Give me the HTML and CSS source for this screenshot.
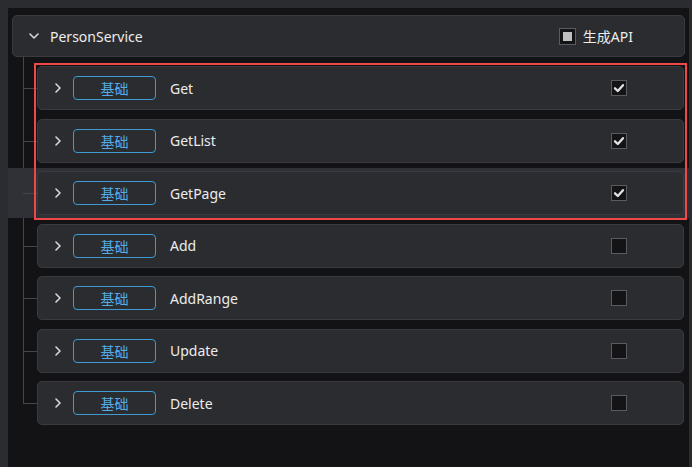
FILE: index.html
```html
<!DOCTYPE html>
<html lang="zh">
<head>
<meta charset="utf-8">
<title>PersonService</title>
<link rel="stylesheet" href="styles.css">
</head>
<body>
<div class="panel">
  <div class="header">
    <svg class="chev-down" width="16" height="16" viewBox="0 0 16 16"><path d="M4 6 L8 10 L12 6" fill="none" stroke="#d8d8d8" stroke-width="1.6" stroke-linecap="round" stroke-linejoin="round"/></svg>
    <span class="title">PersonService</span>
    <label class="gen">
      <span class="cb cb-ind"><span class="ind"></span></span>
      <span class="gen-text">生成API</span>
    </label>
  </div>
  <div class="tree">
    <div class="node">
      <div class="card">
        <svg class="chev" width="16" height="16" viewBox="0 0 16 16"><path d="M6 4 L10 8 L6 12" fill="none" stroke="#d8d8d8" stroke-width="1.6" stroke-linecap="round" stroke-linejoin="round"/></svg>
        <span class="badge">基础</span><span class="name">Get</span>
        <span class="cb checked"><svg width="14" height="14" viewBox="0 0 14 14"><path d="M3 7.3 L5.8 10 L11 4.2" fill="none" stroke="#e2e2e2" stroke-width="2.3" stroke-linecap="round" stroke-linejoin="round"/></svg></span>
      </div>
    </div>
    <div class="node">
      <div class="card">
        <svg class="chev" width="16" height="16" viewBox="0 0 16 16"><path d="M6 4 L10 8 L6 12" fill="none" stroke="#d8d8d8" stroke-width="1.6" stroke-linecap="round" stroke-linejoin="round"/></svg>
        <span class="badge">基础</span><span class="name">GetList</span>
        <span class="cb checked"><svg width="14" height="14" viewBox="0 0 14 14"><path d="M3 7.3 L5.8 10 L11 4.2" fill="none" stroke="#e2e2e2" stroke-width="2.3" stroke-linecap="round" stroke-linejoin="round"/></svg></span>
      </div>
    </div>
    <div class="node hover">
      <div class="card">
        <svg class="chev" width="16" height="16" viewBox="0 0 16 16"><path d="M6 4 L10 8 L6 12" fill="none" stroke="#d8d8d8" stroke-width="1.6" stroke-linecap="round" stroke-linejoin="round"/></svg>
        <span class="badge">基础</span><span class="name">GetPage</span>
        <span class="cb checked"><svg width="14" height="14" viewBox="0 0 14 14"><path d="M3 7.3 L5.8 10 L11 4.2" fill="none" stroke="#e2e2e2" stroke-width="2.3" stroke-linecap="round" stroke-linejoin="round"/></svg></span>
      </div>
    </div>
    <div class="node">
      <div class="card">
        <svg class="chev" width="16" height="16" viewBox="0 0 16 16"><path d="M6 4 L10 8 L6 12" fill="none" stroke="#d8d8d8" stroke-width="1.6" stroke-linecap="round" stroke-linejoin="round"/></svg>
        <span class="badge">基础</span><span class="name">Add</span>
        <span class="cb"></span>
      </div>
    </div>
    <div class="node">
      <div class="card">
        <svg class="chev" width="16" height="16" viewBox="0 0 16 16"><path d="M6 4 L10 8 L6 12" fill="none" stroke="#d8d8d8" stroke-width="1.6" stroke-linecap="round" stroke-linejoin="round"/></svg>
        <span class="badge">基础</span><span class="name">AddRange</span>
        <span class="cb"></span>
      </div>
    </div>
    <div class="node">
      <div class="card">
        <svg class="chev" width="16" height="16" viewBox="0 0 16 16"><path d="M6 4 L10 8 L6 12" fill="none" stroke="#d8d8d8" stroke-width="1.6" stroke-linecap="round" stroke-linejoin="round"/></svg>
        <span class="badge">基础</span><span class="name">Update</span>
        <span class="cb"></span>
      </div>
    </div>
    <div class="node">
      <div class="card">
        <svg class="chev" width="16" height="16" viewBox="0 0 16 16"><path d="M6 4 L10 8 L6 12" fill="none" stroke="#d8d8d8" stroke-width="1.6" stroke-linecap="round" stroke-linejoin="round"/></svg>
        <span class="badge">基础</span><span class="name">Delete</span>
        <span class="cb"></span>
      </div>
    </div>
    <div class="selection"></div>
  </div>
</div>
</body>
</html>
```
FILE: styles.css
```css
* { box-sizing: border-box; }
html, body { margin: 0; padding: 0; height: 100%; }
body {
  background: #2b2c30;
  font-family: "Noto Sans", "Noto Sans CJK SC", sans-serif;
  font-size: 14px;
  color: #ececec;
  overflow: hidden;
}
.panel {
  margin: 8px 0 0 8px;
  width: 681px;
  height: calc(100% - 8px);
  background: #131315;
  padding-top: 7px;
}
.header {
  margin: 0 4px;
  height: 42px;
  background: #2b2c30;
  border: 1px solid #3a3b40;
  border-radius: 5px;
  display: flex;
  align-items: center;
  padding-left: 13px;
  padding-right: 51px;
}
.chev-down { flex: none; }
.title { margin-left: 8px; }
.gen { margin-left: auto; display: flex; align-items: center; }
.gen-text { margin-left: 7px; }
.cb {
  width: 16px;
  height: 16px;
  border: 1px solid #5a5b60;
  background: #141416;
  display: flex;
  align-items: center;
  justify-content: center;
  flex: none;
}
.cb-ind { width: 17px; height: 17px; }
.ind { width: 9px; height: 9px; background: #bfbfbf; }
.tree {
  position: relative;
  padding-top: 6px;
  display: flex;
  flex-direction: column;
  gap: 2.5px;
}
.tree::before {
  content: "";
  position: absolute;
  left: 15px;
  top: 0;
  bottom: 25px;
  width: 1px;
  background: #45464b;
}
.node {
  position: relative;
  padding: 3px 5px 3px 29px;
}
.node::after {
  content: "";
  position: absolute;
  left: 15px;
  width: 14px;
  top: 50%;
  height: 1px;
  background: #45464b;
}
.node.hover { background: #303136; }
.card {
  height: 44px;
  background: #2b2c30;
  border: 1px solid #3a3b40;
  border-radius: 5px;
  display: flex;
  align-items: center;
  padding-left: 12px;
  padding-right: 56px;
}
.chev { flex: none; }
.badge {
  margin-left: 7px;
  width: 83px;
  height: 24px;
  border: 1px solid #3f9ad3;
  border-radius: 4px;
  color: #53ace4;
  display: flex;
  align-items: center;
  justify-content: center;
  flex: none;
}
.name { margin-left: 14px; }
.card .cb { margin-left: auto; }
.selection {
  position: absolute;
  left: 26px;
  top: 6px;
  width: 653px;
  height: 157px;
  border: 2px solid #f04848;
  pointer-events: none;
}
```
